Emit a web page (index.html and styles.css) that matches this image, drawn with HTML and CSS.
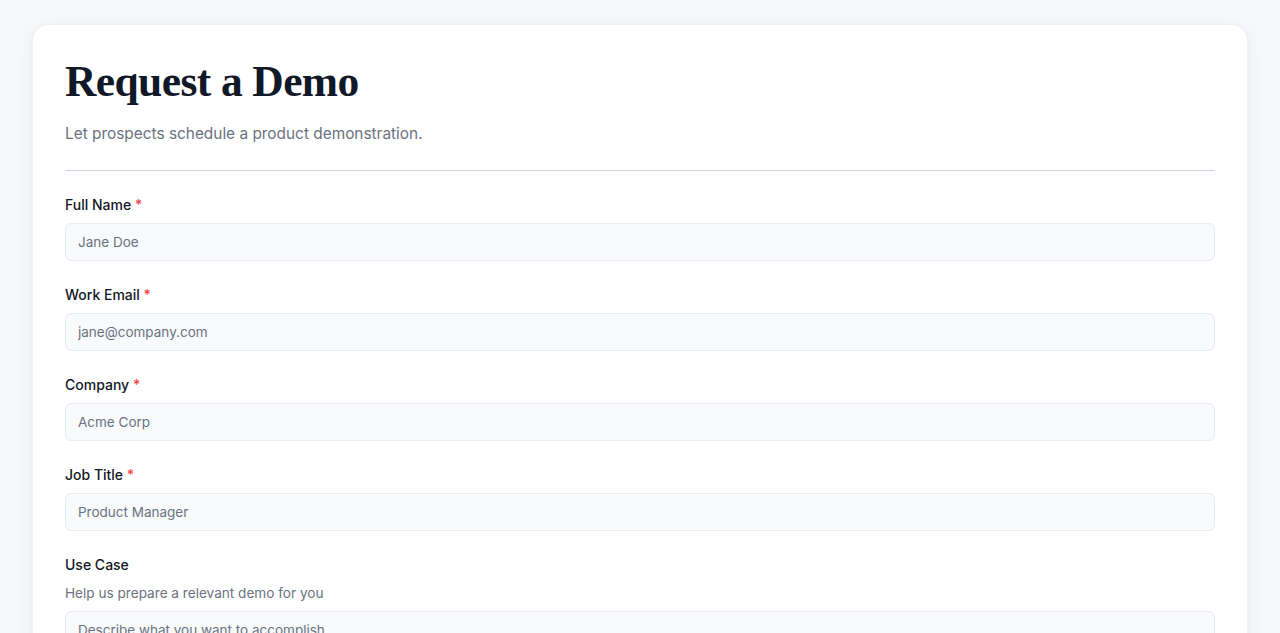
FILE: index.html
```html
<!DOCTYPE html>
<html lang="en">
<head>
<meta charset="utf-8">
<title>Request a Demo</title>
<link rel="stylesheet" href="styles.css">
</head>
<body>
<main class="page">
  <section class="card">
    <header class="card-header">
      <h1 class="title">Request a Demo</h1>
      <p class="subtitle">Let prospects schedule a product demonstration.</p>
    </header>
    <form class="form">
      <div class="field">
        <label class="label" for="name">Full Name <span class="req">*</span></label>
        <input class="input" id="name" type="text" placeholder="Jane Doe">
      </div>
      <div class="field">
        <label class="label" for="email">Work Email <span class="req">*</span></label>
        <input class="input" id="email" type="email" placeholder="jane@company.com">
      </div>
      <div class="field">
        <label class="label" for="company">Company <span class="req">*</span></label>
        <input class="input" id="company" type="text" placeholder="Acme Corp">
      </div>
      <div class="field">
        <label class="label" for="title">Job Title <span class="req">*</span></label>
        <input class="input" id="title" type="text" placeholder="Product Manager">
      </div>
      <div class="field">
        <label class="label" for="usecase">Use Case</label>
        <p class="help">Help us prepare a relevant demo for you</p>
        <textarea class="input textarea" id="usecase" rows="4" placeholder="Describe what you want to accomplish"></textarea>
      </div>
    </form>
  </section>
</main>
</body>
</html>
```

FILE: styles.css
```css
* { box-sizing: border-box; }
html, body { margin: 0; padding: 0; }
body {
  background: #f7f8fa;
  font-family: Inter, "Noto Sans", "Liberation Sans", sans-serif;
  color: #111827;
}
.page {
  padding: 24px 32px;
}
.card {
  background: #ffffff;
  border: 1px solid #eef0f3;
  border-radius: 16px;
  box-shadow: 0 4px 16px rgba(15, 23, 42, 0.06), 0 1px 3px rgba(15, 23, 42, 0.04);
  padding: 33px 32px 40px;
}
.card-header {
  border-bottom: 1px solid #cbd5e1;
  padding-bottom: 24px;
}
.title {
  margin: 0;
  font-family: "Liberation Serif", "Times New Roman", serif;
  font-weight: 700;
  font-size: 43.5px;
  line-height: 1.1;
  color: #111827;
  letter-spacing: -0.6px;
}
.subtitle {
  margin: 16px 0 0;
  font-size: 15.4px;
  line-height: 24px;
  color: #6b7280;
}
.form {
  display: flex;
  flex-direction: column;
  gap: 24px;
  padding-top: 24px;
}
.field {
  display: flex;
  flex-direction: column;
}
.label {
  font-size: 14px;
  line-height: 20px;
  font-weight: 500;
  color: #111827;
  margin-bottom: 8px;
}
.req { color: #ef4444; }
.help {
  margin: 0 0 8px;
  font-size: 13.6px;
  line-height: 20px;
  color: #6b7280;
}
.input {
  width: 100%;
  height: 38px;
  padding: 0 12px;
  font-family: inherit;
  font-size: 13.5px;
  color: #111827;
  background: #f8fafc;
  border: 1px solid #e8ebef;
  border-radius: 6px;
  outline: none;
}
.input::placeholder { color: #6b7280; }
.textarea {
  height: 100px;
  padding: 8px 12px;
  line-height: 20px;
  resize: vertical;
}
```
